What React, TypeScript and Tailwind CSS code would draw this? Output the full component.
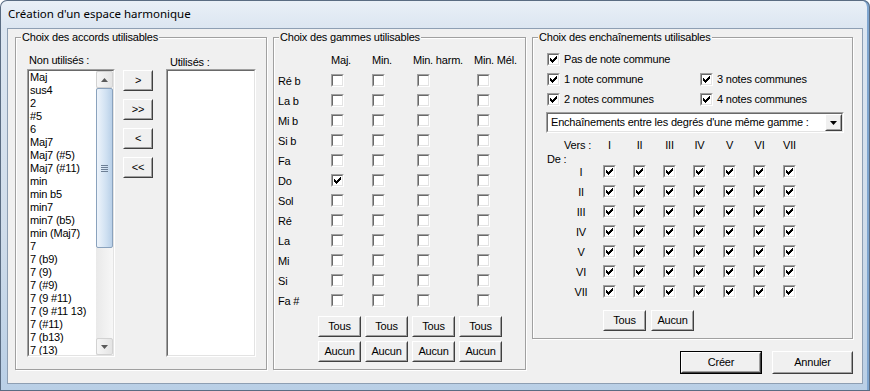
import React from "react";

const chords = [
  "Maj", "sus4", "2", "#5", "6", "Maj7", "Maj7 (#5)", "Maj7 (#11)", "min", "min b5", "min7",
  "min7 (b5)", "min (Maj7)", "7", "7 (b9)", "7 (9)", "7 (#9)", "7 (9 #11)", "7 (9 #11 13)",
  "7 (#11)", "7 (b13)", "7 (13)",
];
const notes = ["Ré b", "La b", "Mi b", "Si b", "Fa", "Do", "Sol", "Ré", "La", "Mi", "Si", "Fa #"];
const romans = ["I", "II", "III", "IV", "V", "VI", "VII"];

function CheckMark() {
  return (
    <svg width="7" height="7" viewBox="0 0 7 7" shapeRendering="crispEdges" className="absolute left-[1px] top-[1px]">
      <path
        d="M6 0h1v1h-1z M5 1h2v1h-2z M0 2h1v1h-1z M4 2h3v1h-3z M0 3h2v1h-2z M3 3h3v1h-3z M0 4h5v1h-5z M1 5h3v1h-3z M2 6h1v1h-1z"
        fill="#000"
      />
    </svg>
  );
}

function Box({ checked }: { checked?: boolean }) {
  return (
    <span className="block w-[13px] h-[13px] shrink-0 border border-t-[#a0a0a0] border-l-[#a0a0a0] border-r-white border-b-white">
      <span className="relative block w-[11px] h-[11px] border border-t-[#696969] border-l-[#696969] border-r-[#e3e3e3] border-b-[#e3e3e3] bg-white">
        {checked && <CheckMark />}
      </span>
    </span>
  );
}

function Btn({ children, className, dflt }: { children: React.ReactNode; className: string; dflt?: boolean }) {
  return (
    <div className={dflt ? `flex border border-black ${className}` : `flex ${className}`}>
      <div className="flex-1 flex border border-t-white border-l-white border-r-[#404040] border-b-[#404040] bg-[#f0f0f0]">
        <div className="flex-1 flex items-center justify-center border border-t-[#f0f0f0] border-l-[#f0f0f0] border-r-[#a0a0a0] border-b-[#a0a0a0]">
          {children}
        </div>
      </div>
    </div>
  );
}

function Group({ title, className, children }: { title: string; className: string; children: React.ReactNode }) {
  return (
    <div className={`relative shrink-0 border border-[#a0a0a0] shadow-[inset_1px_1px_0_#ffffff,1px_1px_0_#ffffff] ${className}`}>
      <span className="absolute -top-[7px] left-[5px] px-[1px] bg-[#f0f0f0] leading-[13px] whitespace-nowrap">{title}</span>
      {children}
    </div>
  );
}

function Sunken({ className, children }: { className: string; children: React.ReactNode }) {
  return (
    <div className={`border border-t-[#a0a0a0] border-l-[#a0a0a0] border-r-white border-b-white ${className}`}>
      <div className="h-full flex border border-t-[#696969] border-l-[#696969] border-r-[#e3e3e3] border-b-[#e3e3e3] bg-white">
        {children}
      </div>
    </div>
  );
}

function ScrollArrow({ up }: { up?: boolean }) {
  return (
    <div className="h-[17px] shrink-0 flex items-center justify-center border border-[#d2d2d2] rounded-[2px] bg-[linear-gradient(90deg,#f6f6f6,#e4e4e4)]">
      <svg width="7" height="4" viewBox="0 0 7 4">
        <path d={up ? "M3.5 0L7 4H0z" : "M0 0H7L3.5 4z"} fill="#5a5a5a" />
      </svg>
    </div>
  );
}

function Scrollbar() {
  return (
    <div className="w-[17px] h-full shrink-0 flex flex-col bg-[linear-gradient(90deg,#e9e9e9,#f7f7f7)]">
      <ScrollArrow up />
      <div className="h-[160px] shrink-0 flex items-center justify-center border border-[#8aa2bd] rounded-[2px] bg-[linear-gradient(90deg,#eef4fb,#d0e1f2_60%,#b9d0e8)]">
        <div className="flex flex-col gap-[1px]">
          <span className="block w-[7px] h-[1px] bg-[#6d7f95]" />
          <span className="block w-[7px] h-[1px] bg-[#6d7f95]" />
          <span className="block w-[7px] h-[1px] bg-[#6d7f95]" />
          <span className="block w-[7px] h-[1px] bg-[#6d7f95]" />
        </div>
      </div>
      <div className="flex-1" />
      <ScrollArrow />
    </div>
  );
}

export default function App() {
  return (
    <div className="w-[870px] h-[391px] overflow-hidden font-['Liberation_Sans',Arial,sans-serif] text-[11px] tracking-[-0.2px] text-black">
      <div className="w-full h-full flex flex-col rounded-t-[7px] shadow-[inset_0_0_0_1px_#5a6c82,inset_-3px_0_0_#7fa6d0] bg-[linear-gradient(180deg,#eaf0f7_0%,#dce6f1_7%,#cfdcea_60%,#b9cfe6_100%)]">
        {/* title bar */}
        <div className="h-[28px] shrink-0 flex items-center pl-[8px] font-['Noto_Sans',sans-serif] text-[11.5px] tracking-normal text-black">
          Création d'un espace harmonique
        </div>

        {/* client */}
        <div className="ml-[7px] mr-[7px] h-[356px] shrink-0 border border-[#8e9fb3] bg-[#f0f0f0] pl-[7px] pt-[8px] flex gap-[6px]">
          {/* Group 1 */}
          <Group title="Choix des accords utilisables" className="w-[252px] h-[333px]">
            <div className="flex pl-[11px] pt-[16px]">
              <div className="w-[88px] flex flex-col">
                <div className="h-[15px] pl-[2px] leading-[13px]">Non utilisés :</div>
                <Sunken className="w-[88px] h-[288px]">
                  <div className="flex-1 overflow-hidden pl-[1px] pt-[0px]">
                    {chords.map((c) => (
                      <div key={c} className="h-[13px] leading-[13px] whitespace-nowrap">{c}</div>
                    ))}
                  </div>
                  <Scrollbar />
                </Sunken>
              </div>
              <div className="ml-[8px] pt-[16px] flex flex-col gap-[8px]">
                <Btn className="w-[30px] h-[21px]">&gt;</Btn>
                <Btn className="w-[30px] h-[21px]">&gt;&gt;</Btn>
                <Btn className="w-[30px] h-[21px]">&lt;</Btn>
                <Btn className="w-[30px] h-[21px]">&lt;&lt;</Btn>
              </div>
              <div className="ml-[13px] w-[90px] flex flex-col">
                <div className="h-[15px] pl-[4px] pt-[2px] leading-[13px]">Utilisés :</div>
                <Sunken className="w-[90px] h-[288px]">
                  <div className="flex-1" />
                </Sunken>
              </div>
            </div>
          </Group>

          {/* Group 2 */}
          <Group title="Choix des gammes utilisables" className="w-[253px] h-[333px]">
            <div className="flex flex-col pl-[4px] pt-[12px]">
              <div className="flex h-[21px] items-center whitespace-nowrap">
                <div className="w-[53px]" />
                <div className="w-[41px]">Maj.</div>
                <div className="w-[41px]">Min.</div>
                <div className="w-[61px]">Min. harm.</div>
                <div>Min. Mél.</div>
              </div>
              {notes.map((n, i) => (
                <div key={n} className="flex h-[20px]">
                  <div className="w-[53px] leading-[20px]">{n}</div>
                  <div className="w-[41px] pt-[3px]"><Box checked={i === 5} /></div>
                  <div className="w-[41px] pt-[3px]"><Box /></div>
                  <div className="w-[61px] pt-[3px] pl-[4px]"><Box /></div>
                  <div className="pt-[3px] pl-[3px]"><Box /></div>
                </div>
              ))}
              <div className="flex gap-[4px] ml-[40px] mt-[5px]">
                {[0, 1, 2, 3].map((k) => (
                  <Btn key={k} className="w-[43px] h-[21px]">Tous</Btn>
                ))}
              </div>
              <div className="flex gap-[4px] ml-[40px] mt-[4px]">
                {[0, 1, 2, 3].map((k) => (
                  <Btn key={k} className="w-[43px] h-[21px]">Aucun</Btn>
                ))}
              </div>
            </div>
          </Group>

          {/* Right column */}
          <div className="w-[321px] shrink-0 flex flex-col">
            <Group title="Choix des enchaînements utilisables" className="w-[321px] h-[302px]">
              <div className="flex flex-col pl-[13px] pt-[11px]">
                <div className="flex h-[20px]">
                  <div className="w-[154px] flex pl-[1px]">
                    <div className="pt-[4px]"><Box checked /></div>
                    <span className="ml-[4px] leading-[20px] whitespace-nowrap">Pas de note commune</span>
                  </div>
                </div>
                <div className="flex h-[20px]">
                  <div className="w-[154px] flex pl-[1px]">
                    <div className="pt-[4px]"><Box checked /></div>
                    <span className="ml-[4px] leading-[20px] whitespace-nowrap">1 note commune</span>
                  </div>
                  <div className="flex">
                    <div className="pt-[4px]"><Box checked /></div>
                    <span className="ml-[4px] leading-[20px] whitespace-nowrap">3 notes communes</span>
                  </div>
                </div>
                <div className="flex h-[20px]">
                  <div className="w-[154px] flex pl-[1px]">
                    <div className="pt-[4px]"><Box checked /></div>
                    <span className="ml-[4px] leading-[20px] whitespace-nowrap">2 notes communes</span>
                  </div>
                  <div className="flex">
                    <div className="pt-[4px]"><Box checked /></div>
                    <span className="ml-[4px] leading-[20px] whitespace-nowrap">4 notes communes</span>
                  </div>
                </div>

                <Sunken className="w-[298px] h-[21px] mt-[3px]">
                  <div className="flex-1 pl-[3px] leading-[17px] whitespace-nowrap overflow-hidden">
                    Enchaînements entre les degrés d'une même gamme :
                  </div>
                  <Btn className="w-[17px] h-[17px]">
                    <svg width="7" height="4" viewBox="0 0 7 4">
                      <path d="M0 0H7L3.5 4z" fill="#000" />
                    </svg>
                  </Btn>
                </Sunken>

                <div className="flex h-[14px] mt-[5px] leading-[14px]">
                  <div className="w-[57px] pr-[12px] text-right whitespace-nowrap">Vers :</div>
                  {romans.map((r) => (
                    <div key={r} className="w-[30px]">
                      <div className="w-[13px] flex justify-center whitespace-nowrap">{r}</div>
                    </div>
                  ))}
                </div>
                <div className="h-[10px] leading-[14px] pl-[1px] whitespace-nowrap">De :</div>
                {romans.map((r) => (
                  <div key={r} className="flex h-[20px]">
                    <div className="w-[57px] pl-[25px]">
                      <div className="w-[20px] text-center leading-[20px]">{r}</div>
                    </div>
                    {romans.map((c) => (
                      <div key={c} className="w-[30px] pt-[3px]"><Box checked /></div>
                    ))}
                  </div>
                ))}
                <div className="flex gap-[5px] ml-[57px] mt-[8px]">
                  <Btn className="w-[43px] h-[21px]">Tous</Btn>
                  <Btn className="w-[43px] h-[21px]">Aucun</Btn>
                </div>
              </div>
            </Group>

            <div className="flex justify-end gap-[10px] mt-[12px]">
              <Btn dflt className="w-[82px] h-[23px]">Créer</Btn>
              <Btn className="w-[81px] h-[23px]">Annuler</Btn>
            </div>
          </div>
        </div>
      </div>
    </div>
  );
}
